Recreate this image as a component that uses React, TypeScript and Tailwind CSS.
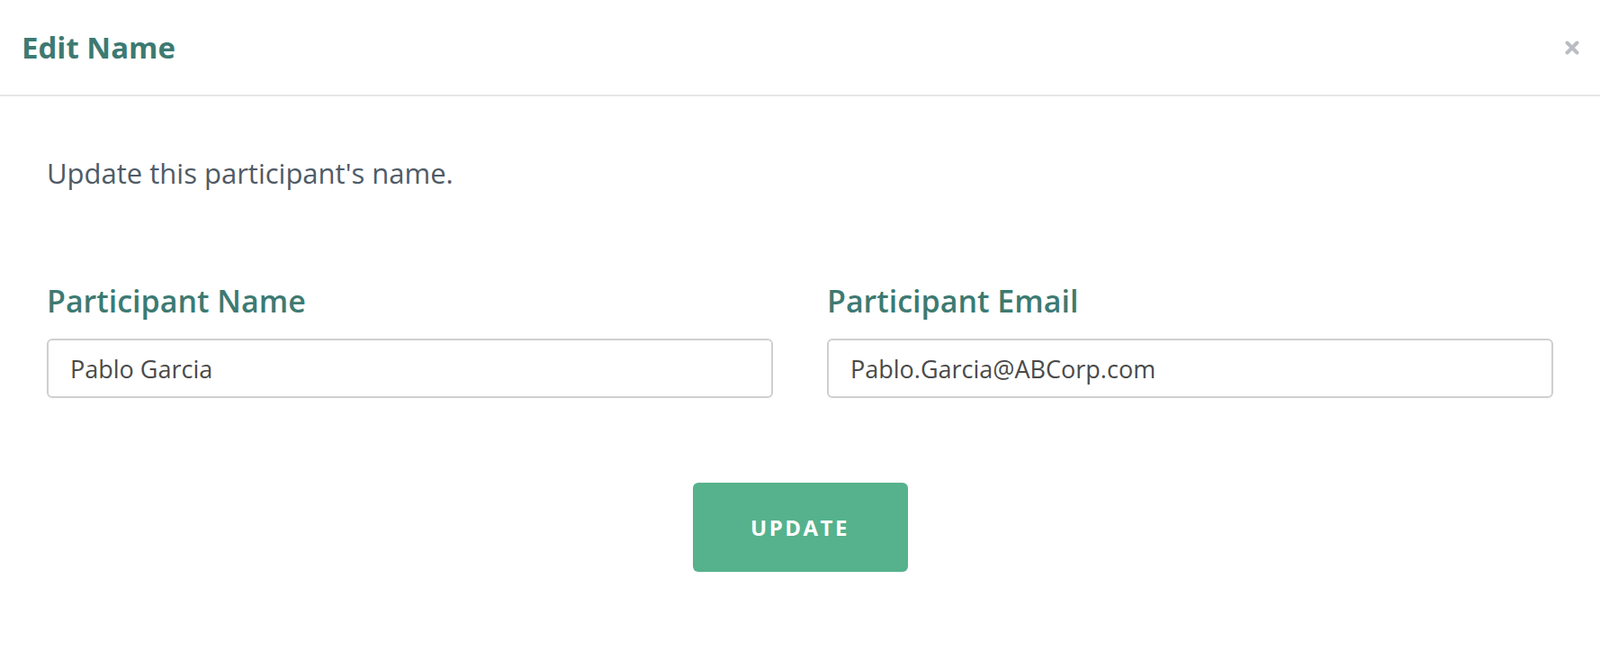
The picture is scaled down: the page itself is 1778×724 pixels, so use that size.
export default function App() {
  return (
    <div className="min-h-screen bg-white font-['Open_Sans',sans-serif]">
      <header className="flex h-[107px] items-center justify-between border-b-2 border-[#e6e6e6] pr-[23px] pl-[24px]">
        <h1 className="text-[33px] font-bold text-[#3d7a72]">Edit Name</h1>
        <button className="text-[#b9bdc2]" aria-label="Close">
          <svg width="16" height="16" viewBox="0 0 16 16">
            <path d="M2.5 2.5 L13.5 13.5 M13.5 2.5 L2.5 13.5" stroke="currentColor" strokeWidth="4" strokeLinecap="round" />
          </svg>
        </button>
      </header>

      <main className="px-[52px] pt-[63px]">
        <p className="text-[31px] leading-[44px] text-[#4f5b66]">Update this participant's name.</p>

        <div className="mt-[98px] grid grid-cols-2 gap-[60px]">
          <label className="flex flex-col gap-[20px]">
            <span className="text-[34px] leading-[44px] font-semibold text-[#3d7a72]">Participant Name</span>
            <input
              defaultValue="Pablo Garcia"
              className="h-[66px] rounded-[6px] border-2 border-[#cfcfcf] px-[24px] text-[27px] text-[#4a4a4a] outline-none"
            />
          </label>
          <label className="flex flex-col gap-[20px]">
            <span className="text-[34px] leading-[44px] font-semibold text-[#3d7a72]">Participant Email</span>
            <input
              defaultValue="Pablo.Garcia@ABCorp.com"
              className="h-[66px] rounded-[6px] border-2 border-[#cfcfcf] px-[24px] text-[27px] text-[#4a4a4a] outline-none"
            />
          </label>
        </div>

        <div className="mt-[94px] flex justify-center">
          <button className="h-[99px] w-[239px] rounded-[6px] bg-[#55b28c] text-[24px] font-bold tracking-[2.5px] text-white">
            UPDATE
          </button>
        </div>
      </main>
    </div>
  );
}
